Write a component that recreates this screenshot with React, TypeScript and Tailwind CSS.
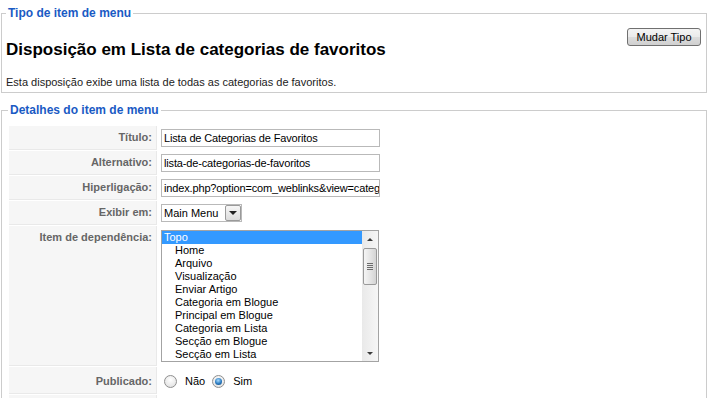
const subItems = [
  "Home",
  "Arquivo",
  "Visualização",
  "Enviar Artigo",
  "Categoria em Blogue",
  "Principal em Blogue",
  "Categoria em Lista",
  "Secção em Blogue",
  "Secção em Lista",
];

const labelClass =
  "w-[148px] shrink-0 bg-[#f6f6f6] border-b border-r border-[#e9e9e9] pr-[4px] text-right text-[11px] font-bold text-[#666]";

const TextBox = ({ value }: { value: string }) => (
  <div className="h-[18px] w-[219px] overflow-hidden whitespace-nowrap border border-[#b9b9b9] bg-white px-[2px] text-[11px] leading-[16px] tracking-[-0.15px] text-black">
    {value}
  </div>
);

const Radio = ({ checked }: { checked?: boolean }) => (
  <span className="flex h-[13px] w-[13px] shrink-0 items-center justify-center rounded-full border border-[#8f8f8f] bg-[radial-gradient(circle_at_50%_35%,#ffffff,#dcdcdc)]">
    {checked && (
      <span className="h-[7px] w-[7px] rounded-full bg-[radial-gradient(circle_at_45%_35%,#a9dcff,#2a7ac0_55%,#0e3e6b)]" />
    )}
  </span>
);

const ScrollBar = () => (
  <div className="flex w-[16px] flex-col bg-[linear-gradient(to_right,#e9e9e9,#f6f6f6)]">
    <div className="flex h-[16px] items-center justify-center">
      <span className="h-0 w-0 border-x-[3px] border-b-[3px] border-x-transparent border-b-[#3a3a3a]" />
    </div>
    <div className="mx-[1px] mt-[1px] flex h-[37px] items-center justify-center rounded-[2px] border border-[#9a9a9a] bg-[linear-gradient(to_right,#f5f5f5,#e2e2e2_60%,#d4d4d4)]">
      <div className="flex flex-col gap-[1px]">
        <span className="h-[1px] w-[6px] bg-[#6c6c6c]" />
        <span className="h-[1px] w-[6px] bg-[#6c6c6c]" />
        <span className="h-[1px] w-[6px] bg-[#6c6c6c]" />
        <span className="h-[1px] w-[6px] bg-[#6c6c6c]" />
      </div>
    </div>
    <div className="flex-1" />
    <div className="flex h-[16px] items-center justify-center">
      <span className="h-0 w-0 border-x-[3px] border-t-[3px] border-x-transparent border-t-[#3a3a3a]" />
    </div>
  </div>
);

const App = (): JSX.Element => {
  return (
    <div className="h-[398px] w-[711px] overflow-hidden bg-white pl-[1px] font-['Liberation_Sans',Arial,sans-serif] text-black">
      <fieldset className="mt-[6px] w-[706px] border border-[#cccccc] pb-[3px] pl-[4px] pr-[5px] pt-[7px]">
        <legend className="px-[2px] text-[12px] font-bold leading-[15px] text-[#1a5ac4]">
          Tipo de item de menu
        </legend>
        <div className="flex justify-between">
          <div>
            <h1 className="mt-[12px] text-[17px] font-bold leading-[20px]">
              Disposição em Lista de categorias de favoritos
            </h1>
            <p className="mt-[16px] text-[11px] leading-[13px] text-[#222]">
              Esta disposição exibe uma lista de todas as categorias de favoritos.
            </p>
          </div>
          <button className="h-[18px] w-[74px] rounded-[3px] border border-[#707070] bg-[linear-gradient(#f4f4f4,#ebebeb_48%,#dcdcdc_52%,#d0d0d0)] text-[11px] leading-[14px] text-black">
            Mudar Tipo
          </button>
        </div>
      </fieldset>

      <fieldset className="mt-[10px] w-[706px] border border-[#cccccc] pl-[6px] pr-[5px] pt-[7px]">
        <legend className="px-[2px] text-[12px] font-bold leading-[15px] text-[#1a5ac4]">
          Detalhes do item de menu
        </legend>
        <div className="flex flex-col gap-[1px] p-[1px]">
          <div className="flex h-[24px] gap-[1px]">
            <div className={`${labelClass} flex items-center justify-end`}>Título:</div>
            <div className="flex items-center pl-[3px]">
              <TextBox value="Lista de Categorias de Favoritos" />
            </div>
          </div>
          <div className="flex h-[24px] gap-[1px]">
            <div className={`${labelClass} flex items-center justify-end`}>Alternativo:</div>
            <div className="flex items-center pl-[3px]">
              <TextBox value="lista-de-categorias-de-favoritos" />
            </div>
          </div>
          <div className="flex h-[24px] gap-[1px]">
            <div className={`${labelClass} flex items-center justify-end`}>Hiperligação:</div>
            <div className="flex items-center pl-[3px]">
              <TextBox value="index.php?option=com_weblinks&view=categories" />
            </div>
          </div>
          <div className="flex h-[24px] gap-[1px]">
            <div className={`${labelClass} flex items-center justify-end`}>Exibir em:</div>
            <div className="flex items-center pl-[3px]">
              <div className="flex h-[18px] w-[81px] border border-[#b9b9b9] bg-white">
                <span className="flex-1 pl-[2px] text-[11px] leading-[16px]">Main Menu</span>
                <span className="flex w-[16px] items-center justify-center rounded-[2px] border border-[#9a9a9a] bg-[linear-gradient(#f6f6f6,#dcdcdc)]">
                  <span className="h-0 w-0 border-x-[4px] border-t-[4px] border-x-transparent border-t-[#222]" />
                </span>
              </div>
            </div>
          </div>
          <div className="flex h-[140px] gap-[1px]">
            <div className={`${labelClass} pt-[3px] leading-[16px]`}>Item de dependência:</div>
            <div className="pl-[3px] pt-[4px]">
              <div className="flex h-[132px] w-[218px] border border-[#a3a3a3] bg-white">
                <ul className="flex-1 text-[11px] leading-[13px]">
                  <li className="bg-[#3399ff] pl-[2px] text-white">Topo</li>
                  {subItems.map((item) => (
                    <li key={item} className="pl-[13px] text-black">
                      {item}
                    </li>
                  ))}
                </ul>
                <ScrollBar />
              </div>
            </div>
          </div>
          <div className="flex h-[27px] gap-[1px]">
            <div className={`${labelClass} flex items-center justify-end pt-[2px]`}>Publicado:</div>
            <div className="flex items-center pl-[6px] pt-[2px] text-[11px]">
              <Radio />
              <span className="ml-[8px]">Não</span>
              <span className="ml-[7px]">
                <Radio checked />
              </span>
              <span className="ml-[8px]">Sim</span>
            </div>
          </div>
          <div className="flex h-[24px] gap-[1px]">
            <div className={labelClass} />
            <div className="pl-[3px]" />
          </div>
        </div>
      </fieldset>
    </div>
  );
};

export default App;
